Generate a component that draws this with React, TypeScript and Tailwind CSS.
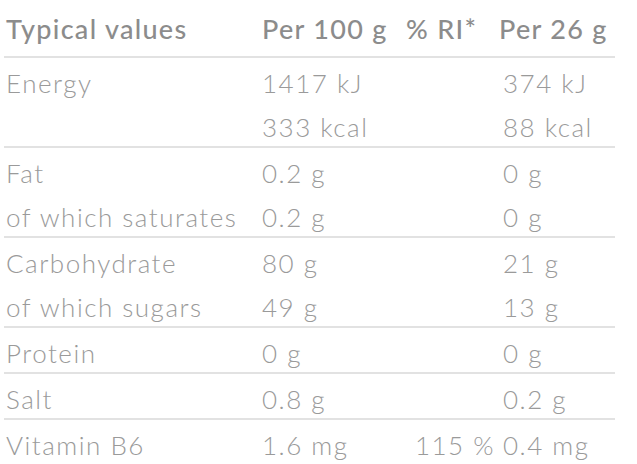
import React from "react";

type Line = { label?: string; per100: string; ri?: string; per26: string };
const groups: Line[][] = [
  [
    { label: "Energy", per100: "1417 kJ", per26: "374 kJ" },
    { per100: "333 kcal", per26: "88 kcal" },
  ],
  [
    { label: "Fat", per100: "0.2 g", per26: "0 g" },
    { label: "of which saturates", per100: "0.2 g", per26: "0 g" },
  ],
  [
    { label: "Carbohydrate", per100: "80 g", per26: "21 g" },
    { label: "of which sugars", per100: "49 g", per26: "13 g" },
  ],
  [{ label: "Protein", per100: "0 g", per26: "0 g" }],
  [{ label: "Salt", per100: "0.8 g", per26: "0.2 g" }],
  [{ label: "Vitamin B6", per100: "1.6 mg", ri: "115 %", per26: "0.4 mg" }],
];

export default function App() {
  return (
    <div
      className="w-[637px] h-[464px] bg-white overflow-hidden"
      style={{ fontFamily: "Lato, 'Noto Sans', sans-serif" }}
    >
      <div className="ml-[4px] w-[611px]">
        <div className="grid grid-cols-[254px_146px_93px_1fr] h-[58px] items-end pb-[14px] border-b-2 border-[#e2e2e2] text-[27px] font-medium text-[#8c8c8c] leading-none tracking-[1.3px]">
          <div className="pl-[2px]">Typical values</div>
          <div className="pl-[4px]">Per 100 g</div>
          <div className="pl-[2px]">% RI*</div>
          <div className="pl-[2px]">Per 26 g</div>
        </div>
        {groups.map((g, gi) => (
          <div
            key={gi}
            className={gi < groups.length - 1 ? "border-b-2 border-[#e2e2e2]" : ""}
          >
            {g.map((l, li) => (
              <div
                key={li}
                className="grid grid-cols-[254px_146px_95px_1fr] h-[44px] items-end pb-[6px] text-[26px] font-light text-[#9a9a9a] leading-none tracking-[1.5px]"
              >
                <div className="pl-[2px]">{l.label ?? ""}</div>
                <div className="pl-[4px]">{l.per100}</div>
                <div className="text-right pr-[4px]">{l.ri ?? ""}</div>
                <div className="pl-[4px]">{l.per26}</div>
              </div>
            ))}
          </div>
        ))}
      </div>
    </div>
  );
}
